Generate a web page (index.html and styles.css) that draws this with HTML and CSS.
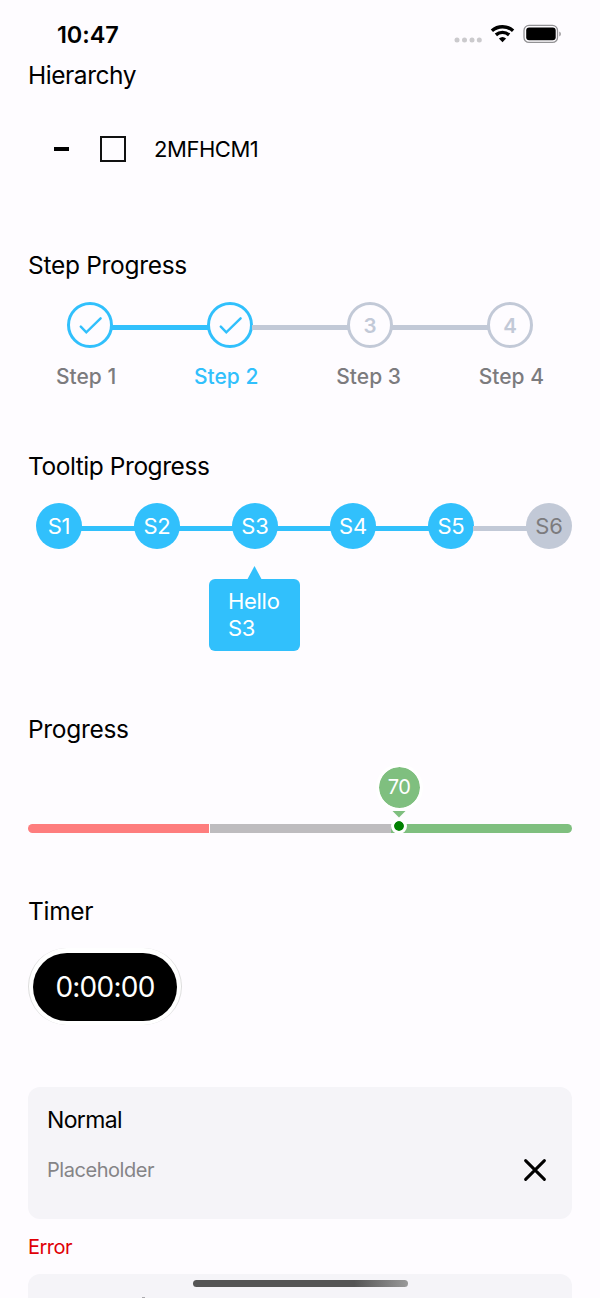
FILE: index.html
```html
<!DOCTYPE html>
<html lang="en">
<head>
<meta charset="utf-8">
<title>Components</title>
<link rel="stylesheet" href="styles.css">
</head>
<body>
<div class="screen">
  <header class="status">
    <span class="clock">10:47</span>
    <svg class="status-icons" width="110" height="24" viewBox="0 0 110 24">
      <g fill="#cbcacd"><circle cx="5" cy="18" r="2.5"/><circle cx="12.5" cy="18" r="2.5"/><circle cx="20" cy="18" r="2.5"/><circle cx="27.300" cy="18" r="2.500"/></g>
      <g fill="none" stroke="#000" stroke-width="3.400">
        <path d="M39.900 8.700a16 16 0 0 1 21.200 0"/>
        <path d="M43.900 12.900a10 10 0 0 1 13.200 0"/>
      </g>
      <path d="M50.500 20.200l-3.600-3.700a5.400 5.400 0 0 1 7.200 0z" fill="#000"/>
      <rect x="72" y="3.400" width="33.500" height="17" rx="5" fill="none" stroke="#929194" stroke-width="1.300"/>
      <rect x="74.200" y="5.600" width="29.500" height="12.600" rx="3" fill="#000"/>
      <path d="M107.300 9.500c2 .8 2 4.200 0 5z" fill="#929194"/>
    </svg>
  </header>

  <section class="hierarchy">
    <h2 class="h-hierarchy">Hierarchy</h2>
    <div class="tree-row">
      <span class="minus"></span>
      <span class="checkbox"></span>
      <span class="node">2MFHCM1</span>
    </div>
  </section>

  <section class="steps-section">
    <h2 class="h-step">Step Progress</h2>
    <div class="steps">
      <span class="step done"><svg width="24" height="20" viewBox="0 0 24 20"><path d="M2.800 10.600l5.500 5.700L22.600 2.300"/></svg></span>
      <i class="link on"></i>
      <span class="step done"><svg width="24" height="20" viewBox="0 0 24 20"><path d="M2.800 10.600l5.500 5.700L22.600 2.300"/></svg></span>
      <i class="link"></i>
      <span class="step">3</span>
      <i class="link"></i>
      <span class="step">4</span>
    </div>
    <div class="labels"><span>Step 1</span><span class="current">Step 2</span><span>Step 3</span><span>Step 4</span></div>
  </section>

  <section class="tooltip-section">
    <h2 class="h-tooltip">Tooltip Progress</h2>
    <div class="stops">
      <span class="stop">S1</span><i class="link on"></i>
      <span class="stop">S2</span><i class="link on"></i>
      <span class="stop">S3</span><i class="link on"></i>
      <span class="stop">S4</span><i class="link on"></i>
      <span class="stop">S5</span><i class="link"></i>
      <span class="stop off">S6</span>
    </div>
    <div class="tip">
      <i class="tip-arrow"></i>
      <div class="tip-box">Hello<br>S3</div>
    </div>
  </section>

  <section class="progress-section">
    <h2 class="h-progress">Progress</h2>
    <div class="range">
      <div class="bar"><i class="low"></i><i class="mid"></i><i class="high"></i></div>
      <div class="marker"><span class="value">70</span><i class="pointer"></i><i class="dot"></i></div>
    </div>
  </section>

  <section class="timer-section">
    <h2 class="h-timer">Timer</h2>
    <div class="timer"><div class="timer-face"><span>0:00:00</span></div></div>
  </section>

  <div class="field">
    <div class="field-label">Normal</div>
    <div class="field-row">
      <span class="placeholder">Placeholder</span>
      <svg width="24" height="24" viewBox="0 0 24 24"><path d="M2.600 2.600l18.800 18.800M21.400 2.600L2.600 21.400"/></svg>
    </div>
  </div>
  <div class="error">Error</div>
  <div class="field next"><i class="peek"></i></div>
  <div class="home"></div>
</div>
</body>
</html>
```
FILE: styles.css
```css
* { box-sizing: border-box; }
body { margin: 0; background: #fefcff; color: #000; font-family: Inter, "Liberation Sans", sans-serif; }
.screen { position: relative; width: 600px; height: 1298px; overflow: hidden; padding: 0 28px; }
i { display: block; }
h2 { margin: 0; font-size: 24.5px; line-height: 30px; font-weight: 400; white-space: nowrap; letter-spacing: -0.3px; }
.h-hierarchy { letter-spacing: -0.45px; }
.h-tooltip { letter-spacing: -0.45px; }

.status { height: 60px; display: flex; justify-content: space-between; padding: 22px 10px 0 29px; }
.clock { font-size: 23.5px; line-height: 26px; font-weight: 600; letter-spacing: -0.1px; }
.status-icons { flex: none; }

.hierarchy { height: 190px; }
.tree-row { display: flex; align-items: center; height: 30px; margin-top: 44px; padding-left: 26px; }
.minus { width: 15px; height: 4px; background: #000; }
.checkbox { width: 26px; height: 26px; border: 2px solid #111; margin-left: 31px; }
.node { font-size: 22px; line-height: 30px; margin-left: 28px; letter-spacing: -0.45px; }

.steps-section { height: 201px; }
.steps { display: flex; align-items: center; margin-top: 22px; padding: 0 39px; }
.step { flex: none; width: 46px; height: 46px; border: 3px solid #c2c9d7; border-radius: 50%; color: #c2c9d7; display: flex; align-items: center; justify-content: center; font-size: 20.5px; font-weight: 600; }
.done { border-color: #31c0fc; }
.done svg { margin-top: 1px; }
.done path { fill: none; stroke: #31c0fc; stroke-width: 2.4; stroke-linecap: round; }
.link { flex: 1; height: 5px; margin: 5px -1px 0; background: #c2c9d7; }
.link.on { background: #31c0fc; }
.labels { display: flex; justify-content: space-between; padding: 0 28px; margin-top: 15px; font-size: 21px; line-height: 27px; font-weight: 500; color: #7c7b7e; }
.current { color: #31c0fc; }

.tooltip-section { height: 263px; }
.stops { display: flex; align-items: center; margin-top: 22px; padding-left: 8px; }
.stop { flex: none; width: 46px; height: 46px; border-radius: 50%; background: #31c0fc; color: #fff; font-size: 22px; line-height: 46px; text-align: center; letter-spacing: -0.2px; }
.off { background: #c2c9d7; color: #7c7b7e; }
.tip { width: 91px; margin: 17px 0 0 181px; }
.tip-arrow { width: 15px; height: 14px; margin: 0 auto -1px; background: #31c0fc; clip-path: polygon(50% 0, 100% 100%, 0 100%); }
.tip-box { height: 72px; border-radius: 6px; background: #31c0fc; color: #fff; font-size: 22px; line-height: 27px; letter-spacing: -0.3px; padding: 9px 0 0 19px; }

.progress-section { height: 182px; }
.range { position: relative; padding-top: 80px; }
.bar { display: flex; gap: 1px; height: 9px; border-radius: 5px; overflow: hidden; background: #fff; }
.low { width: 181px; background: #fe7d7e; }
.mid { width: 181px; background: #bebcbf; }
.high { flex: 1; background: #7fbf7f; margin-left: -1px; }
.marker { position: absolute; left: 347.5px; top: 19.5px; width: 47px; display: flex; flex-direction: column; align-items: center; }
.value { width: 47px; height: 47px; border: 3px solid #fff; border-radius: 50%; background: #7fbf7f; background-clip: padding-box; color: #fff; font-size: 20px; line-height: 41px; letter-spacing: -0.6px; text-align: center; }
.pointer { width: 14px; height: 7px; background: #7fbf7f; clip-path: polygon(0 0, 100% 0, 50% 100%); }
.dot { width: 16px; height: 16px; border: 3px solid #fff; border-radius: 50%; background: #008000; background-clip: padding-box; }

.timer-section { height: 191px; }
.timer { width: 154px; height: 77px; margin-top: 22px; padding: 5px 4px 4px; border-radius: 39px; background: #fff; border: 0 solid #ddd; border-left-width: 1px; border-right-width: 1px; }
.timer-face { height: 68px; border-radius: 34px; background: #000; color: #fff; font-size: 28px; line-height: 68px; letter-spacing: -0.75px; text-align: center; }

.field { height: 132px; border-radius: 12px; background: #f5f4f8; padding: 17px 25px 0 19px; }
.field-label { font-size: 23px; line-height: 32px; letter-spacing: -0.65px; }
.field-row { display: flex; justify-content: space-between; align-items: center; margin-top: 19px; height: 30px; }
.field-row path { stroke: #000; stroke-width: 3; stroke-linecap: round; }
.placeholder { font-size: 20px; letter-spacing: -0.45px; color: #858487; }
.error { margin: 15px 0 14px; font-size: 20px; line-height: 26px; letter-spacing: -0.5px; color: #e00006; }
.next { padding: 23px 0 0 114px; }
.peek { width: 3px; height: 1px; background: #aaa9ad; }
.home { position: absolute; left: 193px; top: 1280px; width: 215px; height: 7px; border-radius: 4px; background: linear-gradient(90deg, #555 0, #555 75%, #999 100%); }
```
